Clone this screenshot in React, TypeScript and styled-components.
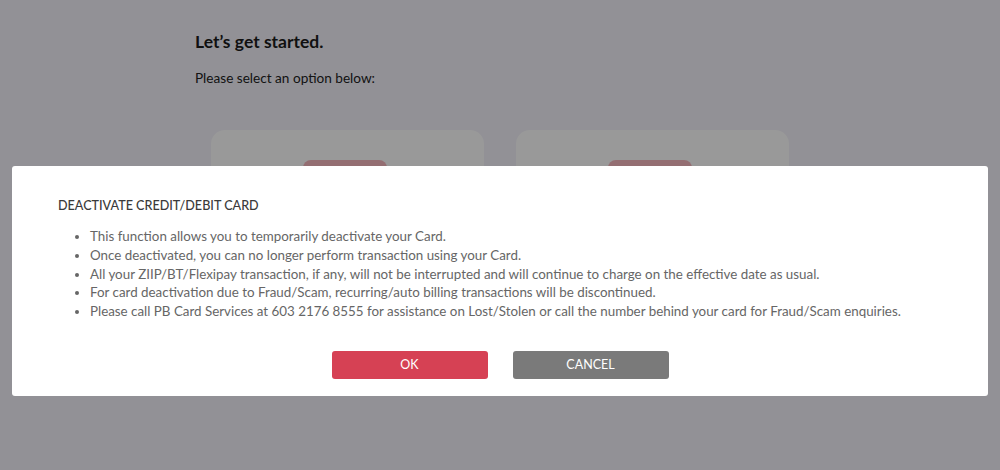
import React from "react";
import styled, { createGlobalStyle } from "styled-components";

const Global = createGlobalStyle`
  html, body { margin: 0; padding: 0; }
  body {
    background: #f3f2fa;
    font-family: "Lato", "Liberation Sans", sans-serif;
    width: 1000px;
    height: 470px;
    overflow: hidden;
  }
`;

const Page = styled.main`
  width: 610px;
  margin: 0 auto;
  padding-top: 31px;
`;

const Heading = styled.h1`
  margin: 0;
  font-size: 17.5px;
  font-weight: 700;
  color: #1c1c1c;
  line-height: 22px;
`;

const Sub = styled.p`
  margin: 16px 0 0;
  font-size: 13.6px;
  color: #222;
  line-height: 18px;
`;

const Cards = styled.div`
  display: flex;
  gap: 32px;
  padding: 0 16px;
  margin-top: 43px;
`;

const OptionCard = styled.div`
  flex: 1;
  height: 200px;
  background: #ffffff;
  border-radius: 14px;
  display: flex;
  justify-content: center;
  padding-top: 30px;
  padding-right: 6px;
`;

const CardBadge = styled.div`
  width: 84px;
  height: 30px;
  border-radius: 8px;
  background: #f7b7be;
`;

const Overlay = styled.div`
  position: fixed;
  inset: 0;
  background: rgba(0, 0, 0, 0.4);
  padding: 166px 12px 0;
`;

const Modal = styled.section`
  background: #ffffff;
  border-radius: 3px;
  padding: 32px 46px 17px;
`;

const ModalTitle = styled.h2`
  margin: 0;
  font-size: 12.6px;
  font-weight: 500;
  color: #3a3a3a;
  line-height: 16px;
`;

const Bullets = styled.ul`
  margin: 13px 0 0;
  padding-left: 32px;
  font-size: 13.36px;
  color: #666;
  line-height: 18.8px;
`;

const Actions = styled.div`
  display: flex;
  justify-content: center;
  gap: 25px;
  margin-top: 30px;
`;

const Btn = styled.button<{ $variant: "ok" | "cancel" }>`
  width: 156px;
  height: 28px;
  border: none;
  border-radius: 3px;
  font-family: inherit;
  font-size: 12.5px;
  color: #fff;
  background: ${(p) => (p.$variant === "ok" ? "#d64154" : "#7a7a7a")};
  cursor: pointer;
`;

const items = [
  "This function allows you to temporarily deactivate your Card.",
  "Once deactivated, you can no longer perform transaction using your Card.",
  "All your ZIIP/BT/Flexipay transaction, if any, will not be interrupted and will continue to charge on the effective date as usual.",
  "For card deactivation due to Fraud/Scam, recurring/auto billing transactions will be discontinued.",
  "Please call PB Card Services at 603 2176 8555 for assistance on Lost/Stolen or call the number behind your card for Fraud/Scam enquiries.",
];

export default function App() {
  return (
    <>
      <Global />
      <Page>
        <Heading>Let’s get started.</Heading>
        <Sub>Please select an option below:</Sub>
        <Cards>
          <OptionCard>
            <CardBadge />
          </OptionCard>
          <OptionCard>
            <CardBadge />
          </OptionCard>
        </Cards>
      </Page>
      <Overlay>
        <Modal>
          <ModalTitle>DEACTIVATE CREDIT/DEBIT CARD</ModalTitle>
          <Bullets>
            {items.map((t) => (
              <li key={t}>{t}</li>
            ))}
          </Bullets>
          <Actions>
            <Btn $variant="ok">OK</Btn>
            <Btn $variant="cancel">CANCEL</Btn>
          </Actions>
        </Modal>
      </Overlay>
    </>
  );
}
